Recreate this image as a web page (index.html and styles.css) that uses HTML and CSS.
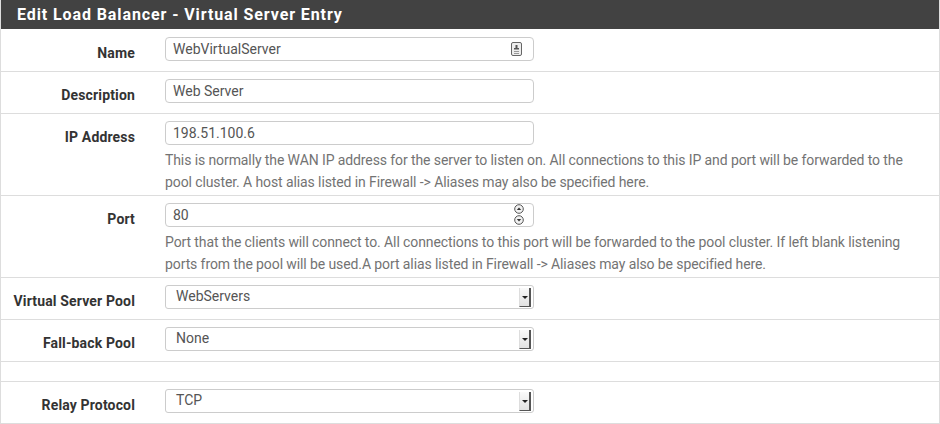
FILE: index.html
```html
<!DOCTYPE html>
<html lang="en">
<head>
  <meta charset="UTF-8" />
  <title>Edit Load Balancer - Virtual Server Entry</title>
  <link rel="stylesheet" href="styles.css">
</head>
<body>
  <div class="panel">
    <div class="panel-heading">Edit Load Balancer - Virtual Server Entry</div>
    <div class="form-row first">
      <label class="row-label">Name</label>
      <div class="row-field">
        <div class="input">
          WebVirtualServer
          <svg class="keyicon" width="11" height="14" viewBox="0 0 11 14">
            <rect x="0.5" y="0.5" width="10" height="13" rx="1.5" fill="#eee" stroke="#666"/>
            <rect x="4.5" y="3" width="2" height="3" fill="#555"/>
            <rect x="3" y="6" width="5" height="1.5" fill="#555"/>
            <rect x="3" y="9" width="5" height="1" fill="#999"/>
            <rect x="3" y="11" width="5" height="1" fill="#999"/>
          </svg>
        </div>
      </div>
    </div>
    <div class="form-row">
      <label class="row-label">Description</label>
      <div class="row-field">
        <div class="input">Web Server</div>
      </div>
    </div>
    <div class="form-row with-help">
      <label class="row-label">IP Address</label>
      <div class="row-field">
        <div class="input">198.51.100.6</div>
        <div class="help">This is normally the WAN IP address for the server to listen on. All connections to this IP and port will be forwarded to the pool cluster. A host alias listed in Firewall -&gt; Aliases may also be specified here.</div>
      </div>
    </div>
    <div class="form-row with-help">
      <label class="row-label">Port</label>
      <div class="row-field">
        <div class="input">
          80
          <span class="spinner">
            <svg width="10" height="10" viewBox="0 0 10 10"><circle cx="5" cy="5" r="4.3" fill="#f2f2f2" stroke="#555"/><path d="M2.8 6 L5 3.6 L7.2 6 Z" fill="#333"/></svg>
            <svg width="10" height="10" viewBox="0 0 10 10"><circle cx="5" cy="5" r="4.3" fill="#f2f2f2" stroke="#555"/><path d="M2.8 4 L5 6.4 L7.2 4 Z" fill="#333"/></svg>
          </span>
        </div>
        <div class="help">Port that the clients will connect to. All connections to this port will be forwarded to the pool cluster. If left blank listening ports from the pool will be used.A port alias listed in Firewall -&gt; Aliases may also be specified here.</div>
      </div>
    </div>
    <div class="form-row">
      <label class="row-label">Virtual Server Pool</label>
      <div class="row-field">
        <div class="select">WebServers<span class="arrow"></span></div>
      </div>
    </div>
    <div class="form-row">
      <label class="row-label">Fall-back Pool</label>
      <div class="row-field">
        <div class="select">None<span class="arrow"></span></div>
      </div>
    </div>
    <div class="form-row spacer"></div>
    <div class="form-row">
      <label class="row-label">Relay Protocol</label>
      <div class="row-field">
        <div class="select">TCP<span class="arrow"></span></div>
      </div>
    </div>
  </div>
</body>
</html>
```

FILE: styles.css
```css
body {
  margin: 0;
  font-family: Roboto, "Liberation Sans", sans-serif;
  font-size: 14px;
  color: #333;
  background: #fff;
}
.panel {
  width: 938px;
  border: 1px solid #ddd;
  border-top: none;
}
.panel-heading {
  background: #424242;
  color: #fff;
  font-weight: bold;
  font-size: 16px;
  letter-spacing: 0.9px;
  height: 29px;
  line-height: 30px;
  padding-left: 16px;
}
.form-row {
  display: grid;
  grid-template-columns: 149px 1fr;
  border-bottom: 1px solid #ddd;
  padding: 7px 0 10px;
}
.form-row.first {
  padding-top: 8px;
}
.form-row.with-help {
  padding-bottom: 2px;
}
.form-row.spacer {
  padding: 0;
  height: 19px;
}
.row-label {
  box-sizing: border-box;
  height: 24px;
  text-align: right;
  padding-right: 15px;
  padding-top: 8px;
  line-height: 16px;
  font-weight: bold;
  letter-spacing: 0.15px;
  color: #333;
}
.row-field {
  padding-left: 15px;
  padding-right: 14px;
}
.input, .select {
  position: relative;
  box-sizing: border-box;
  width: 369px;
  height: 24px;
  border: 1px solid #ccc;
  border-radius: 4px;
  padding: 0 7px;
  line-height: 22px;
  color: #555;
  background: #fff;
}
.keyicon {
  position: absolute;
  right: 11px;
  top: 4px;
}
.spinner {
  position: absolute;
  right: 9px;
  top: 0;
  display: flex;
  flex-direction: column;
  gap: 1px;
}
.spinner svg {
  display: block;
}
.help {
  color: #737373;
  line-height: 22px;
  margin-top: 4px;
  letter-spacing: -0.1px;
}
.select {
  border-radius: 3px;
  padding-left: 10px;
  line-height: 20px;
}
.select .arrow {
  position: absolute;
  right: 2px;
  top: 2px;
  width: 9px;
  height: 18px;
  background: linear-gradient(#fafafa, #e2e2e2);
  border-left: 1px solid #ddd;
  border-right: 2px solid #555;
  border-bottom: 1px solid #555;
}
.select .arrow::after {
  content: "";
  position: absolute;
  left: 2px;
  top: 8px;
  border-left: 3px solid transparent;
  border-right: 3px solid transparent;
  border-top: 3px solid #222;
}
```
